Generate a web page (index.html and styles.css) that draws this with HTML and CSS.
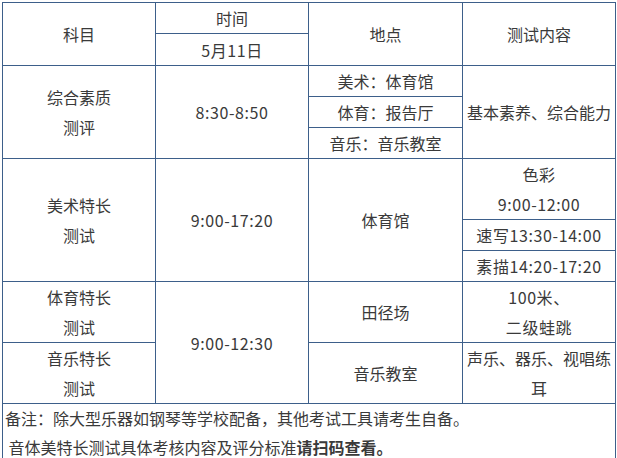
FILE: index.html
```html
<!DOCTYPE html>
<html lang="zh-CN">
<head>
<meta charset="utf-8">
<title>测试安排</title>
<link rel="stylesheet" href="styles.css">
</head>
<body>
<table class="schedule">
  <colgroup>
    <col class="c1"><col class="c2"><col class="c3"><col class="c4">
  </colgroup>
  <tr class="r-head1">
    <td rowspan="2">科目</td>
    <td>时间</td>
    <td rowspan="2">地点</td>
    <td rowspan="2">测试内容</td>
  </tr>
  <tr class="r-head2">
    <td class="num">5月11日</td>
  </tr>
  <tr class="r-one">
    <td rowspan="3">综合素质<br>测评</td>
    <td rowspan="3" class="num">8:30-8:50</td>
    <td>美术：体育馆</td>
    <td rowspan="3">基本素养、综合能力</td>
  </tr>
  <tr class="r-one">
    <td>体育：报告厅</td>
  </tr>
  <tr class="r-one">
    <td>音乐：音乐教室</td>
  </tr>
  <tr class="r-two">
    <td rowspan="3">美术特长<br>测试</td>
    <td rowspan="3" class="num">9:00-17:20</td>
    <td rowspan="3">体育馆</td>
    <td class="num">色彩<br>9:00-12:00</td>
  </tr>
  <tr class="r-short">
    <td class="num">速写13:30-14:00</td>
  </tr>
  <tr class="r-one">
    <td class="num">素描14:20-17:20</td>
  </tr>
  <tr class="r-sport">
    <td>体育特长<br>测试</td>
    <td rowspan="2" class="num">9:00-12:30</td>
    <td>田径场</td>
    <td class="num">100米、<br>二级蛙跳</td>
  </tr>
  <tr class="r-music">
    <td>音乐特长<br>测试</td>
    <td>音乐教室</td>
    <td>声乐、器乐、视唱练耳</td>
  </tr>
  <tr>
    <td colspan="4" class="notes">备注：除大型乐器如钢琴等学校配备，其他考试工具请考生自备。<br>&nbsp;音体美特长测试具体考核内容及评分标准<strong>请扫码查看。</strong></td>
  </tr>
</table>
</body>
</html>
```
FILE: styles.css
```css
html, body {
  margin: 0;
  padding: 0;
  background: #ffffff;
}

body {
  padding: 2px 0 0 2px;
  font-family: "Noto Sans CJK SC", "Noto Sans", sans-serif;
  font-size: 16px;
  color: #3a3a3a;
}

.schedule {
  border-collapse: collapse;
  table-layout: fixed;
  width: 613px;
}

.c1 { width: 153px; }
.c2 { width: 153px; }
.c3 { width: 154px; }
.c4 { width: 153px; }

.schedule td {
  border: 1px solid #3d5f8a;
  padding: 0 2px;
  line-height: 30px;
  text-align: center;
  vertical-align: middle;
}

.schedule td.num {
  letter-spacing: 0.6px;
}

.r-head1 { height: 30px; }
.r-head2 { height: 32px; }
.r-one { height: 30px; }
.r-two { height: 60px; }
.r-short { height: 28px; }
.r-sport { height: 61px; }
.r-music { height: 59px; }

.schedule td.notes {
  text-align: left;
  vertical-align: top;
  padding: 0 2px;
  line-height: 29px;
}

.notes strong {
  font-weight: bold;
}
```
